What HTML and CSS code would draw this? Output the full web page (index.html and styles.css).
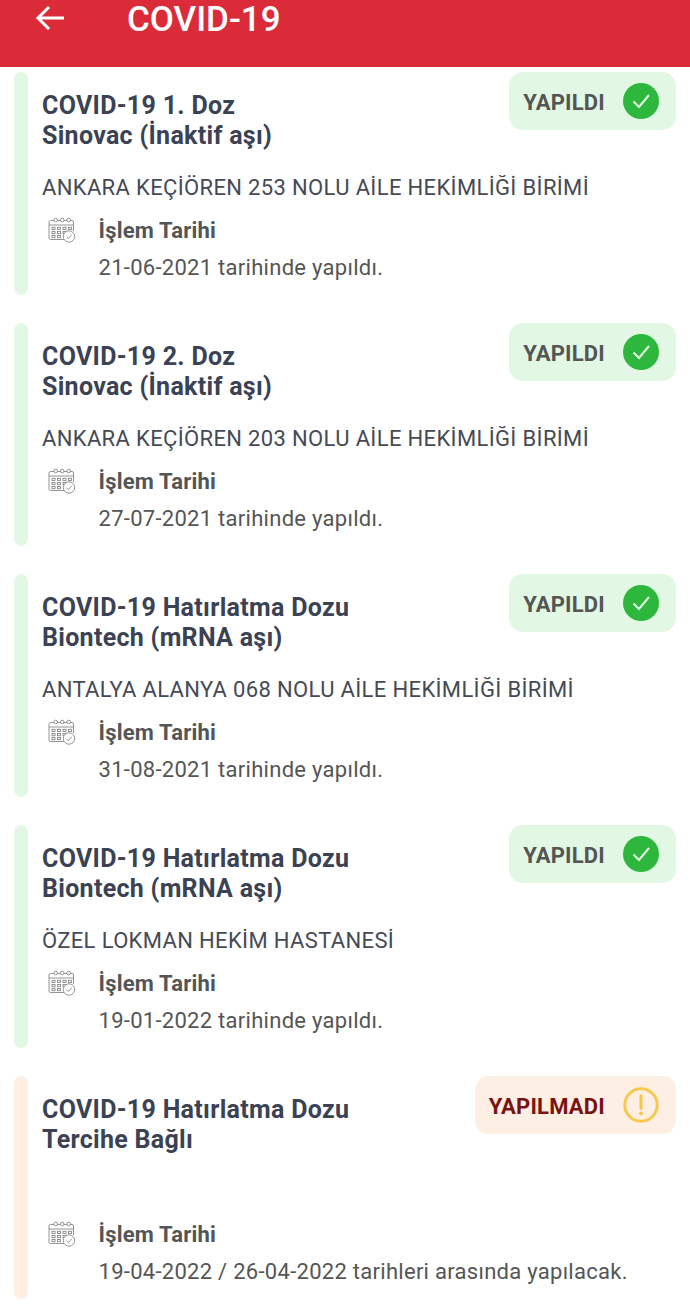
FILE: index.html
```html
<!DOCTYPE html>
<html>
<head>
  <title>COVID-19</title>
  <link rel="stylesheet" href="styles.css">
</head>
<body>
  <svg class="icon-defs" width="0" height="0">
    <symbol id="cal" viewBox="0 0 28 26">
      <g fill="none" stroke="#888" stroke-width="0.9">
        <path d="M6 3.5H2.5a1.5 1.5 0 0 0-1.5 1.5v16a1.5 1.5 0 0 0 1.5 1.5H16"/>
        <path d="M22 3.5h2a1.5 1.5 0 0 1 1.5 1.5v9"/>
        <path d="M9.5 3.5h3M16 3.5h3"/>
        <path d="M1 8h24.5"/>
        <circle cx="7.7" cy="3" r="1.8"/>
        <circle cx="14.2" cy="3" r="1.8"/>
        <circle cx="20.7" cy="3" r="1.8"/>
        <rect x="4" y="10.3" width="3" height="2.2"/>
        <rect x="9.5" y="10.3" width="3" height="2.2"/>
        <rect x="15" y="10.3" width="3" height="2.2"/>
        <rect x="20.5" y="10.3" width="3" height="2.2"/>
        <rect x="4" y="14.5" width="3" height="2.2"/>
        <rect x="9.5" y="14.5" width="3" height="2.2"/>
        <rect x="15" y="14.5" width="3" height="2.2"/>
        <rect x="4" y="18.5" width="3" height="2.2"/>
        <rect x="9.5" y="18.5" width="3" height="2.2"/>
        <circle cx="21" cy="19.5" r="5.7" fill="#fff"/>
        <path d="M18.3 19.6l2 2 3.6-4"/>
      </g>
    </symbol>
    <symbol id="ok" viewBox="0 0 36 36">
      <circle cx="18" cy="18" r="18" fill="#2db83d"/>
      <path d="M10.5 18.5l5.5 5.5 10-12" fill="none" stroke="#e4f9e6" stroke-width="2"/>
    </symbol>
    <symbol id="warn" viewBox="0 0 36 36">
      <circle cx="18" cy="18" r="16.2" fill="none" stroke="#f8c84e" stroke-width="3"/>
      <path d="M18 8.5v13" fill="none" stroke="#f8c84e" stroke-width="3" stroke-linecap="round"/>
      <circle cx="18" cy="26.5" r="1.9" fill="#f8c84e"/>
    </symbol>
  </svg>

  <div class="header">
    <svg class="back" width="30" height="26" viewBox="0 0 30 26">
      <path d="M29 13H3M14 2L3 13l11 11" fill="none" stroke="#fff" stroke-width="3"/>
    </svg>
    <h1>COVID-19</h1>
  </div>

  <div class="list">
    <div class="card done">
      <div class="stripe"></div>
      <div class="card-body">
        <div class="card-top">
          <div class="title">COVID-19 1. Doz<br>Sinovac (İnaktif aşı)</div>
          <div class="badge"><span>YAPILDI</span><svg class="badge-icon"><use href="#ok"/></svg></div>
        </div>
        <div class="place">ANKARA KEÇİÖREN 253 NOLU AİLE HEKİMLİĞİ BİRİMİ</div>
        <div class="when">
          <svg class="cal"><use href="#cal"/></svg>
          <div>
            <div class="when-label">İşlem Tarihi</div>
            <div class="when-text">21-06-2021 tarihinde yapıldı.</div>
          </div>
        </div>
      </div>
    </div>

    <div class="card done">
      <div class="stripe"></div>
      <div class="card-body">
        <div class="card-top">
          <div class="title">COVID-19 2. Doz<br>Sinovac (İnaktif aşı)</div>
          <div class="badge"><span>YAPILDI</span><svg class="badge-icon"><use href="#ok"/></svg></div>
        </div>
        <div class="place">ANKARA KEÇİÖREN 203 NOLU AİLE HEKİMLİĞİ BİRİMİ</div>
        <div class="when">
          <svg class="cal"><use href="#cal"/></svg>
          <div>
            <div class="when-label">İşlem Tarihi</div>
            <div class="when-text">27-07-2021 tarihinde yapıldı.</div>
          </div>
        </div>
      </div>
    </div>

    <div class="card done">
      <div class="stripe"></div>
      <div class="card-body">
        <div class="card-top">
          <div class="title">COVID-19 Hatırlatma Dozu<br>Biontech (mRNA aşı)</div>
          <div class="badge"><span>YAPILDI</span><svg class="badge-icon"><use href="#ok"/></svg></div>
        </div>
        <div class="place">ANTALYA ALANYA 068 NOLU AİLE HEKİMLİĞİ BİRİMİ</div>
        <div class="when">
          <svg class="cal"><use href="#cal"/></svg>
          <div>
            <div class="when-label">İşlem Tarihi</div>
            <div class="when-text">31-08-2021 tarihinde yapıldı.</div>
          </div>
        </div>
      </div>
    </div>

    <div class="card done">
      <div class="stripe"></div>
      <div class="card-body">
        <div class="card-top">
          <div class="title">COVID-19 Hatırlatma Dozu<br>Biontech (mRNA aşı)</div>
          <div class="badge"><span>YAPILDI</span><svg class="badge-icon"><use href="#ok"/></svg></div>
        </div>
        <div class="place">ÖZEL LOKMAN HEKİM HASTANESİ</div>
        <div class="when">
          <svg class="cal"><use href="#cal"/></svg>
          <div>
            <div class="when-label">İşlem Tarihi</div>
            <div class="when-text">19-01-2022 tarihinde yapıldı.</div>
          </div>
        </div>
      </div>
    </div>

    <div class="card pending">
      <div class="stripe"></div>
      <div class="card-body">
        <div class="card-top">
          <div class="title">COVID-19 Hatırlatma Dozu<br>Tercihe Bağlı</div>
          <div class="badge"><span>YAPILMADI</span><svg class="badge-icon"><use href="#warn"/></svg></div>
        </div>
        <div class="place">&nbsp;</div>
        <div class="when">
          <svg class="cal"><use href="#cal"/></svg>
          <div>
            <div class="when-label">İşlem Tarihi</div>
            <div class="when-text">19-04-2022 / 26-04-2022 tarihleri arasında yapılacak.</div>
          </div>
        </div>
      </div>
    </div>
  </div>
</body>
</html>
```

FILE: styles.css
```css
html, body {
  height: 1310px;
  overflow: hidden;
}
body {
  margin: 0;
  font-family: Roboto, "Liberation Sans", sans-serif;
  background: #fff;
}
.icon-defs {
  display: block;
  height: 0;
}
.header {
  height: 67px;
  background: #db2b39;
  display: flex;
  align-items: flex-start;
  padding-left: 35px;
  box-sizing: border-box;
}
.back {
  margin-top: 5px;
  flex-shrink: 0;
}
.header h1 {
  margin: 0 0 0 62px;
  font-size: 35px;
  line-height: 40px;
  font-weight: 500;
  color: #fff;
}
.list {
  display: flex;
  flex-direction: column;
  gap: 28px;
  padding: 5px 14px 0;
}
.card {
  height: 223px;
  display: flex;
  gap: 14px;
}
.stripe {
  width: 14px;
  flex-shrink: 0;
  border-radius: 7px;
}
.done .stripe {
  background: #e3f8e4;
}
.pending .stripe {
  background: #fdefe3;
}
.card-body {
  flex: 1;
}
.card-top {
  display: flex;
  justify-content: space-between;
  align-items: flex-start;
  height: 96px;
}
.title {
  margin-top: 18.5px;
  font-size: 25px;
  line-height: 30px;
  font-weight: 700;
  letter-spacing: 0.3px;
  color: #3a4254;
}
.badge {
  display: flex;
  align-items: center;
  height: 58px;
  padding: 0 17px 0 14px;
  border-radius: 14px;
  font-size: 22px;
  font-weight: 700;
  letter-spacing: 0.2px;
  background: #e3f8e4;
  color: #555;
}
.badge span {
  margin-top: 2px;
}
.pending .badge {
  background: #fdefe3;
  color: #7a1212;
}
.badge-icon {
  width: 36px;
  height: 36px;
  margin-left: 18px;
}
.place {
  font-size: 22px;
  line-height: 28px;
  letter-spacing: 0.35px;
  color: #454a55;
  margin-top: 6px;
}
.when {
  display: flex;
  margin-top: 14px;
  color: #555;
}
.cal {
  width: 28px;
  height: 26px;
  margin: 1px 22.5px 0 6px;
  flex-shrink: 0;
}
.when-label {
  font-size: 22px;
  line-height: 30px;
  font-weight: 700;
  letter-spacing: 0.2px;
}
.when-text {
  font-size: 22px;
  line-height: 28px;
  letter-spacing: 0.28px;
  margin-top: 8px;
}
```
